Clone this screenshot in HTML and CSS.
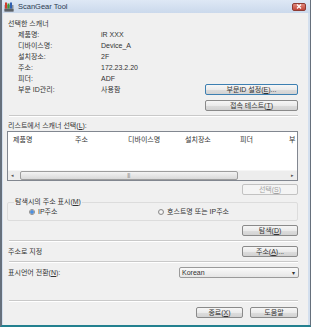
FILE: index.html
```html
<!DOCTYPE html>
<html lang="ko">
<head>
    <meta charset="UTF-8">
    <meta name="viewport" content="width=device-width, initial-scale=1.0">
    <title>ScanGear Tool</title>
    <link rel="stylesheet" href="styles.css">
</head>
<body>
    <div class="window">
        <div class="titlebar">
            <svg class="app-icon" width="10" height="10" viewBox="0 0 10 10">
                <rect x="0.5" y="3" width="9" height="6.5" fill="#8a9097"/>
                <rect x="1" y="0.5" width="2" height="6" fill="#d23a2a"/>
                <rect x="3.5" y="1.5" width="2" height="5" fill="#3a9a3a"/>
                <rect x="6" y="0.5" width="2" height="6" fill="#2f5fb0"/>
                <rect x="0.5" y="7" width="9" height="2.5" fill="#5b6168"/>
            </svg>
            <span class="title">ScanGear Tool</span>
            <span class="close">
                <svg width="6" height="5" viewBox="0 0 6 5"><path d="M1 0.5 L5 4.5 M5 0.5 L1 4.5" stroke="#fff" stroke-width="1.2"/></svg>
            </span>
        </div>
        <div class="client">
            <section class="selected">
                <div class="info">
                    <div class="heading">선택한 스캐너</div>
                    <div class="props">
                        <span>제품명:</span><span>iR XXX</span>
                        <span>디바이스명:</span><span>Device_A</span>
                        <span>설치장소:</span><span>2F</span>
                        <span>주소:</span><span>172.23.2.20</span>
                        <span>피더:</span><span>ADF</span>
                        <span>부문 ID관리:</span><span>사용함</span>
                    </div>
                </div>
                <div class="side-buttons">
                    <button class="btn wide focus">부문ID 설정(<u>E</u>)...</button>
                    <button class="btn wide">접속 테스트(<u>T</u>)</button>
                </div>
            </section>
            <hr class="sep">
            <div class="label">리스트에서 스캐너 선택(<u>L</u>):</div>
            <div class="listbox">
                <div class="list-head">
                    <span class="col c1">제품명</span>
                    <span class="col c2">주소</span>
                    <span class="col c3">디바이스명</span>
                    <span class="col c4">설치장소</span>
                    <span class="col c5">피더</span>
                    <span class="col c6">부</span>
                </div>
                <div class="list-body"></div>
                <div class="hscroll">
                    <span class="arrow">&#9666;</span>
                    <span class="track"><span class="thumb">|||</span></span>
                    <span class="arrow">&#9656;</span>
                </div>
            </div>
            <div class="row-end">
                <button class="btn" disabled>선택(<u>S</u>)</button>
            </div>
            <fieldset class="group">
                <legend>탐색시의 주소 표시(<u>M</u>)</legend>
                <div class="radios">
                    <label class="radio"><span class="dot checked"></span>IP주소</label>
                    <label class="radio"><span class="dot"></span>호스트명 또는 IP주소</label>
                </div>
            </fieldset>
            <div class="row-end">
                <button class="btn">탐색(<u>D</u>)</button>
            </div>
            <hr class="sep">
            <div class="row">
                <span class="label">주소로 지정</span>
                <button class="btn">주소(<u>A</u>)...</button>
            </div>
            <hr class="sep">
            <div class="row">
                <span class="label">표시언어 전환(<u>N</u>):</span>
                <div class="combo"><span>Korean</span><span class="caret">&#9662;</span></div>
            </div>
            <hr class="sep footer-sep">
            <div class="footer">
                <button class="btn short">종료(<u>X</u>)</button>
                <button class="btn">도움말</button>
            </div>
        </div>
    </div>
</body>
</html>
```

FILE: styles.css
```css
/* Dialog layout */
* { margin: 0; padding: 0; box-sizing: border-box; }
body {
    font-family: "Liberation Sans", "Noto Sans CJK KR", sans-serif;
    font-size: 7px;
    color: #333333;
    background: #ffffff;
}
.window {
    width: 311px;
    height: 327px;
    display: flex;
    flex-direction: column;
    background: #d3dfee;
    border-left: 2px solid #66707c;
    border-right: 1px solid #66707c;
    border-bottom: 2px solid #23808f;
}
.titlebar {
    height: 13px;
    display: flex;
    align-items: center;
    padding-left: 2px;
    background: linear-gradient(#dee8f5, #cbd9ec);
}
.app-icon { margin-right: 4px; }
.title { color: #2a3a50; font-size: 7.5px; }
.close {
    margin-left: auto;
    margin-right: 4px;
    width: 14px;
    height: 8px;
    display: flex;
    align-items: center;
    justify-content: center;
    border: 1px solid #8e3b33;
    border-radius: 2px;
    background: linear-gradient(#e0877a, #c2463a);
}
.client {
    flex: 1;
    margin: 0 2px 0 1px;
    background: #f0f0f0;
    padding: 6px 10px 0 4px;
}
.selected { display: flex; align-items: flex-end; justify-content: space-between; }
.info { padding-left: 1px; padding-bottom: 16px; }
.heading { line-height: 10px; }
.props {
    display: grid;
    grid-template-columns: 83px auto;
    padding-left: 10px;
    line-height: 11px;
}
.side-buttons { display: flex; flex-direction: column; gap: 5px; }
.btn {
    font-family: inherit;
    font-size: 7px;
    color: #333333;
    width: 56px;
    height: 11px;
    line-height: 9px;
    border: 1px solid #8a8a8a;
    border-radius: 2px;
    background: linear-gradient(#f6f6f6 0%, #ebebeb 50%, #dddddd 51%, #d2d2d2 100%);
}
.btn u { text-decoration: underline; }
.btn.wide { width: 93px; }
.btn.short { width: 47px; }
.btn.focus { border-color: #3c7fb1; }
.btn:disabled { color: #a3a3a3; border-color: #c2c2c2; background: #f4f4f4; }
.sep {
    border: none;
    border-top: 1px solid #c9c9c9;
    border-bottom: 1px solid #ffffff;
    margin: 4px 0 0 2px;
}
.label { line-height: 10px; padding-left: 1px; }
.sep + .label { margin-top: 4px; }
.listbox {
    height: 50px;
    border: 1px solid #828790;
    background: #ffffff;
    display: flex;
    flex-direction: column;
}
.list-head { display: flex; height: 14px; line-height: 16px; }
.col { padding-left: 5px; white-space: nowrap; overflow: hidden; }
.c1 { width: 62px; }
.c2 { width: 53px; }
.c3 { width: 57px; }
.c4 { width: 55px; }
.c5 { width: 49px; }
.c6 { flex: 1; }
.list-body { flex: 1; }
.hscroll {
    height: 10px;
    display: flex;
    background: #ededed;
    border-top: 1px solid #f6f6f6;
}
.arrow { width: 10px; font-size: 5px; line-height: 9px; text-align: center; color: #555; }
.track { flex: 1; padding: 0 50px 0 2px; display: flex; }
.thumb {
    width: 218px;
    border: 1px solid #9d9d9d;
    border-radius: 2px;
    background: linear-gradient(#f3f3f3, #d9d9d9);
    text-align: center;
    font-size: 5px;
    line-height: 7px;
    color: #777;
    letter-spacing: -0.5px;
}
.row-end { display: flex; justify-content: flex-end; margin-top: 3px; }
.group {
    margin-top: 2px;
    border: 1px solid #dcdcdc;
    border-radius: 2px;
    padding: 0 0 3px 0;
}
.group legend { margin-left: 6px; padding: 0 1px; line-height: 10px; }
.radios { display: flex; line-height: 10px; }
.radio { display: flex; align-items: center; gap: 3px; }
.radio:first-child { width: 150px; padding-left: 21px; }
.dot {
    width: 6px;
    height: 6px;
    border-radius: 50%;
    border: 1px solid #8b8b8b;
    background: radial-gradient(#ffffff, #dcdcdc);
}
.dot.checked { background: radial-gradient(#4b8fe0 0 1.5px, #e6eef8 2px); }
.group + .row-end { margin-top: 4px; }
.row {
    display: flex;
    justify-content: space-between;
    align-items: center;
    margin-top: 3px;
    height: 11px;
}
.sep + .row { margin-top: 4px; }
.combo {
    width: 120px;
    height: 11px;
    margin-right: -1px;
    border: 1px solid #9a9a9a;
    border-radius: 2px;
    background: linear-gradient(#fafafa, #e6e6e6);
    display: flex;
    justify-content: space-between;
    align-items: center;
    padding: 0 3px 0 2px;
}
.caret { font-size: 6px; color: #333; }
.footer-sep { margin-top: 22px; }
.footer { display: flex; justify-content: flex-end; gap: 7px; margin-top: 5px; }
.footer .btn:last-child { width: 48px; }
```
